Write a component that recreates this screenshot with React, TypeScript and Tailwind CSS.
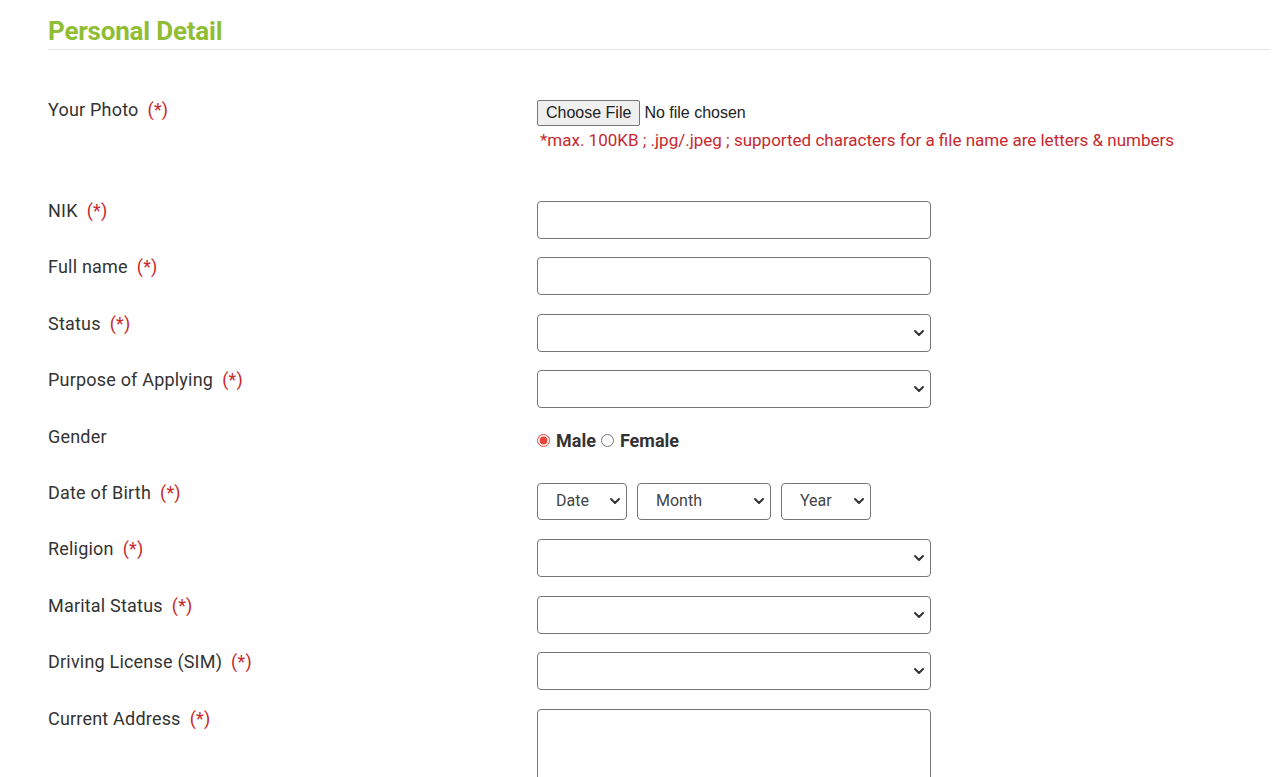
import { ReactNode } from 'react';

const Req = () => <span className="ml-[9px] text-[#c8282d]">(*)</span>;

function Chevron() {
  return (
    <svg className="pointer-events-none absolute right-[6px] top-1/2 h-[12px] w-[12px] -translate-y-1/2" viewBox="0 0 12 12" fill="none">
      <path d="M2 4l4 4 4-4" stroke="#333" strokeWidth="2" strokeLinecap="round" strokeLinejoin="round" />
    </svg>
  );
}

function Select({ className, placeholder }: { className: string; placeholder?: string }) {
  return (
    <div className={`relative ${className}`}>
      <select
        defaultValue=""
        className="h-full w-full appearance-none rounded-[4px] border border-[#767676] bg-white pl-[18px] pr-[24px] text-[16px] text-[#444] outline-none"
      >
        <option value="">{placeholder ?? ''}</option>
      </select>
      <Chevron />
    </div>
  );
}

function Row({ label, required = true, children, labelClass = '' }: { label: string; required?: boolean; children: ReactNode; labelClass?: string }) {
  return (
    <div className="flex">
      <div className={`w-[489px] shrink-0 text-[18px] leading-[18px] tracking-[0.2px] text-[#333] ${labelClass}`}>
        {label}
        {required && <Req />}
      </div>
      <div className="flex-1">{children}</div>
    </div>
  );
}

const textInput = 'block h-[38px] w-[394px] rounded-[4px] border border-[#767676] bg-white outline-none';

export default function App() {
  return (
    <div className="min-h-[777px] bg-white font-['Roboto',sans-serif]">
      <div className="pl-[48px] pr-[6px]">
        {/* Header */}
        <div className="border-b border-[#e2e2e2] pt-[17px] pb-[3px]">
          <h2 className="text-[26px] leading-[29px] font-bold tracking-[-0.2px] text-[#8fbd34]">Personal Detail</h2>
        </div>

        {/* Photo */}
        <div className="mt-[51px] flex">
          <div className="w-[489px] shrink-0 text-[18px] leading-[18px] tracking-[0.2px] text-[#333]">
            Your Photo
            <Req />
          </div>
          <div className="-mt-[1px]">
            <div className="flex items-center">
              <input type="file" className="text-[16px] leading-[20px] font-['Liberation_Sans',Arial,sans-serif] text-[#222] file:mr-[4px] file:rounded-[2px] file:border file:border-[#767676] file:bg-[#efefef] file:px-[8px] file:py-[2px] file:text-[16px]" />
            </div>
            <p className="mt-[3px] pl-[3px] text-[17px] leading-[22px] text-[#c8282d]">
              *max. 100KB ; .jpg/.jpeg ; supported characters for a file name are letters &amp; numbers
            </p>
          </div>
        </div>

        {/* Fields */}
        <div className="mt-[50px] flex flex-col gap-y-[18.4px]">
          <Row label="NIK" labelClass="pt-[1px]">
            <input type="text" className={textInput} />
          </Row>
          <Row label="Full name" labelClass="pt-[1px]">
            <input type="text" className={textInput} />
          </Row>
          <Row label="Status" labelClass="pt-[1px]">
            <Select className="h-[38px] w-[394px]" />
          </Row>
          <Row label="Purpose of Applying" labelClass="pt-[1px]">
            <Select className="h-[38px] w-[394px]" />
          </Row>
          <Row label="Gender" required={false} labelClass="pt-[1px]">
            <div className="flex h-[38px] items-start pt-0 text-[18px] font-bold text-[#333]">
              <label className="flex items-center">
                <input type="radio" name="gender" defaultChecked className="mr-[6px] h-[13px] w-[13px] accent-[#e8453c]" />
                Male
              </label>
              <label className="ml-[5px] flex items-center">
                <input type="radio" name="gender" className="mr-[6px] h-[13px] w-[13px]" />
                Female
              </label>
            </div>
          </Row>
          <Row label="Date of Birth" labelClass="pt-[1px]">
            <div className="flex h-[38px] gap-[10px]">
              <Select className="h-[37px] w-[90px]" placeholder="Date" />
              <Select className="h-[37px] w-[134px]" placeholder="Month" />
              <Select className="h-[37px] w-[90px]" placeholder="Year" />
            </div>
          </Row>
          <Row label="Religion" labelClass="pt-[1px]">
            <Select className="h-[38px] w-[394px]" />
          </Row>
          <Row label="Marital Status" labelClass="pt-[1px]">
            <Select className="h-[38px] w-[394px]" />
          </Row>
          <Row label="Driving License (SIM)" labelClass="pt-[1px]">
            <Select className="h-[38px] w-[394px]" />
          </Row>
          <Row label="Current Address" labelClass="pt-[1px]">
            <textarea className="block h-[110px] w-[394px] resize-none rounded-[4px] border border-[#767676] bg-white outline-none" />
          </Row>
        </div>
      </div>
    </div>
  );
}
